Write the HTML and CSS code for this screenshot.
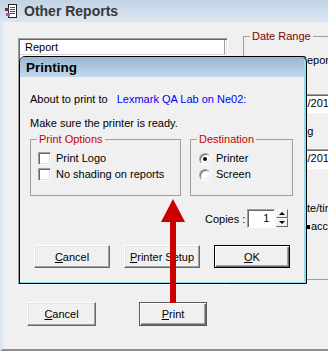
FILE: index.html
```html
<!DOCTYPE html>
<html>
<head>
<meta charset="utf-8">
<link rel="stylesheet" href="styles.css">
</head>
<body>
<div class="win">
  <div class="titlebar">
    <svg class="app-icon" width="12" height="15" viewBox="0 0 12 15">
      <rect x="3.5" y="0.5" width="8" height="13" fill="#fff" stroke="#222"/>
      <rect x="5" y="3" width="5" height="1" fill="#555"/>
      <rect x="5" y="5" width="5" height="1" fill="#555"/>
      <rect x="5" y="7" width="5" height="1" fill="#555"/>
      <rect x="5" y="9" width="5" height="1" fill="#555"/>
      <rect x="0" y="4" width="4" height="3" fill="#444"/>
      <rect x="1" y="9" width="4" height="3" fill="#e040c0"/>
    </svg>
    <span class="title-text">Other Reports</span>
  </div>
  <div class="win-body">
    <div class="top-row">
      <div class="listbox">
        <div class="lv-header">Report</div>
      </div>
      <fieldset class="group date-range">
        <legend>Date Range</legend>
        <div class="dr-content">
          <div class="dr-label dr-r1">Report</div>
          <div class="field dr-f1">01/01/2017</div>
          <div class="dr-label dr-r3">Ending</div>
          <div class="field dr-f2">12/31/2017</div>
          <div class="dr-label dr-r5">Date/time stamp</div>
          <div class="dr-label dr-r6"><span class="dr-mark"></span>according to date</div>
        </div>
      </fieldset>
    </div>
    <div class="btn-row">
      <button class="btn win-btn"><u>C</u>ancel</button>
      <button class="btn win-btn default"><u>P</u>rint</button>
    </div>
  </div>
</div>

<div class="dialog">
  <div class="dlg-title">Printing</div>
  <div class="dlg-body">
    <div class="line">About to print to <span class="printer">Lexmark QA Lab on Ne02:</span></div>
    <div class="line line2">Make sure the printer is ready.</div>
    <div class="groups">
      <fieldset class="group opts">
        <legend>Print Options</legend>
        <label class="opt"><input type="checkbox" class="chk"><span>Print Logo</span></label>
        <label class="opt"><input type="checkbox" class="chk"><span>No shading on reports</span></label>
      </fieldset>
      <fieldset class="group dest">
        <legend>Destination</legend>
        <label class="opt"><input type="radio" name="d" class="rad" checked><span>Printer</span></label>
        <label class="opt"><input type="radio" name="d" class="rad"><span>Screen</span></label>
      </fieldset>
    </div>
    <div class="copies">
      <span class="copies-label">Copies :</span>
      <div class="spin">
        <div class="spin-field">1</div>
        <div class="spin-btns">
          <div class="spin-btn"><span class="tri-up"></span></div>
          <div class="spin-btn"><span class="tri-down"></span></div>
        </div>
      </div>
    </div>
    <div class="dlg-buttons">
      <button class="btn dlg-btn"><u>C</u>ancel</button>
      <button class="btn dlg-btn"><u>P</u>rinter Setup</button>
      <button class="btn dlg-btn default"><u>O</u>K</button>
    </div>
  </div>
</div>

<svg class="arrow" width="26" height="104" viewBox="0 0 26 104">
  <polygon points="13,0 1,23 25,23" fill="#c80000"/>
  <rect x="10" y="22" width="6" height="82" fill="#c80000"/>
</svg>
</body>
</html>
```
FILE: styles.css
```css
* { box-sizing: border-box; }
html, body { margin: 0; padding: 0; }
body {
  width: 328px;
  height: 351px;
  overflow: hidden;
  position: relative;
  background: #f0f0f0;
  font-family: "Liberation Sans", Arial, sans-serif;
  font-size: 11px;
  color: #000;
}

.win {
  width: 328px;
  height: 351px;
  display: flex;
  flex-direction: column;
}
.titlebar {
  height: 22px;
  flex: none;
  display: flex;
  align-items: center;
  padding-left: 5px;
  background: linear-gradient(#c3d3e6, #dbe6f2);
}
.app-icon { display: block; margin-right: 7px; margin-top: 1px; }
.title-text {
  font-weight: bold;
  font-size: 14px;
  color: #383838;
  line-height: 22px;
}
.win-body {
  flex: 1;
  border-left: 3px solid #dde6f0;
  border-bottom: 2px solid #8e8e8e;
  padding: 8px 0 0 15px;
  display: flex;
  flex-direction: column;
  overflow: hidden;
}
.top-row {
  display: flex;
  align-items: flex-start;
  gap: 15px;
}
.listbox {
  flex: none;
  width: 210px;
  height: 247px;
  margin-top: 8px;
  background: #fff;
  border: 1px solid;
  border-color: #a0a0a0 #fff #fff #a0a0a0;
  box-shadow: inset 1px 1px 0 #696969, inset -1px -1px 0 #e3e3e3;
  padding: 1px;
}
.lv-header {
  height: 15px;
  line-height: 14px;
  padding-left: 5px;
  background: #fff;
  border-bottom: 1px solid #d5d5d5;
  border-right: 1px solid #a0a0a0;
  margin-right: 1px;
}

.group {
  margin: 0;
  border: 1px solid #a0a0a0;
  padding: 0 0 0 6px;
  min-width: 0;
}
.group legend {
  padding: 0 2px;
  line-height: 13px;
  color: #c80000;
}
.date-range {
  flex: none;
  width: 120px;
  height: 250px;
  padding: 0;
  border-right: none;
}
.date-range legend { color: #800000; margin-left: 6px; }
.dr-content { display: flex; flex-direction: column; align-items: flex-start; }
.dr-label { line-height: 13px; white-space: nowrap; }
.dr-r1 { margin: 11px 0 0 55px; }
.field {
  height: 19px;
  width: 90px;
  line-height: 16px;
  padding-left: 3px;
  background: #fff;
  border: 1px solid;
  border-color: #a0a0a0 #fff #fff #a0a0a0;
  box-shadow: inset 1px 1px 0 #696969;
  white-space: nowrap;
}
.dr-f1 { margin: 27px 0 0 32px; }
.dr-r3 { margin: 12px 0 0 35px; }
.dr-f2 { margin: 11px 0 0 32px; height: 20px; }
.dr-r5 { margin: 33px 0 0 49px; }
.dr-r6 { margin: 5px 0 0 63px; display: flex; align-items: center; }
.dr-mark { display: inline-block; width: 3px; height: 4px; background: #000; margin-right: 1px; }

.btn-row {
  display: flex;
  gap: 43px;
  margin: 17px 0 0 9px;
}
.btn {
  font-family: inherit;
  font-size: 11px;
  color: #000;
  background: #f0f0f0;
  border: 1px solid;
  border-color: #fff #696969 #696969 #fff;
  box-shadow: inset -1px -1px 0 #a0a0a0, inset 1px 1px 0 #e3e3e3;
  padding: 0;
  margin: 0;
}
.btn.default {
  border: 1px solid #000;
  box-shadow: inset 1px 1px 0 #fff, inset -1px -1px 0 #696969, inset -2px -2px 0 #a0a0a0;
}
.win-btn { width: 69px; height: 24px; }
.win-btn.default { width: 68px; border-color: #5a5a5a; }

.dialog {
  position: absolute;
  left: 19px;
  top: 56px;
  width: 288px;
  height: 228px;
  background: #f0f0f0;
  border: 1px solid #000;
  border-radius: 6px 6px 0 0;
  box-shadow: inset -2px -1px 0 #8fdcf0;
  overflow: hidden;
}
.dlg-title {
  height: 20px;
  line-height: 21px;
  padding-left: 6px;
  margin-right: 2px;
  font-weight: bold;
  font-size: 13.5px;
  background: linear-gradient(#9ab6d3, #c3d8ed);
}
.dlg-body { padding: 16px 0 0 10px; }
.line { line-height: 13px; }
.line2 { margin-top: 11px; }
.printer { color: #0000ff; margin-left: 6px; }
.groups { display: flex; gap: 9px; margin-top: 3px; }
.opts { width: 151px; height: 63px; }
.dest { width: 103px; height: 63px; }
.opt {
  display: flex;
  align-items: center;
  height: 13px;
  line-height: 13px;
  margin-top: 3px;
  margin-left: 1px;
}
.group legend + .opt { margin-top: 6px; }
.dest .opt { margin-left: 2px; }
.chk {
  appearance: none;
  margin: 0 5px 0 0;
  width: 13px;
  height: 13px;
  background: #fff;
  border: 1px solid;
  border-color: #a0a0a0 #fff #fff #a0a0a0;
  box-shadow: inset 1px 1px 0 #696969, inset -1px -1px 0 #e3e3e3;
}
.rad {
  appearance: none;
  margin: 0 5px 0 0;
  width: 12px;
  height: 12px;
  border-radius: 50%;
  background: #fff;
  border: 1px solid;
  border-color: #a0a0a0 #fff #fff #a0a0a0;
  box-shadow: inset 1px 1px 0 #696969, inset -1px -1px 0 #e3e3e3;
  position: relative;
}
.rad:checked::after {
  content: "";
  position: absolute;
  left: 3px;
  top: 3px;
  width: 4px;
  height: 4px;
  border-radius: 50%;
  background: #000;
}

.copies {
  display: flex;
  align-items: center;
  margin: 13px 0 0 175px;
  height: 19px;
}
.copies-label { margin-right: 2px; }
.spin { display: flex; gap: 1px; }
.spin-field {
  width: 28px;
  height: 19px;
  line-height: 17px;
  text-align: right;
  padding-right: 5px;
  background: #fff;
  border: 1px solid;
  border-color: #a0a0a0 #fff #fff #a0a0a0;
  box-shadow: inset 1px 1px 0 #696969;
}
.spin-btns { display: flex; flex-direction: column; }
.spin-btn {
  width: 12px;
  height: 9px;
  background: #f0f0f0;
  border: 1px solid;
  border-color: #fff #696969 #696969 #fff;
  display: flex;
  align-items: center;
  justify-content: center;
}
.tri-up { width: 0; height: 0; border-left: 3px solid transparent; border-right: 3px solid transparent; border-bottom: 3px solid #000; }
.tri-down { width: 0; height: 0; border-left: 3px solid transparent; border-right: 3px solid transparent; border-top: 3px solid #000; }

.dlg-buttons {
  display: flex;
  gap: 14px;
  margin: 17px 0 0 4px;
}
.dlg-btn { width: 76px; height: 23px; }

.arrow {
  position: absolute;
  left: 160px;
  top: 199px;
  display: block;
}
```
